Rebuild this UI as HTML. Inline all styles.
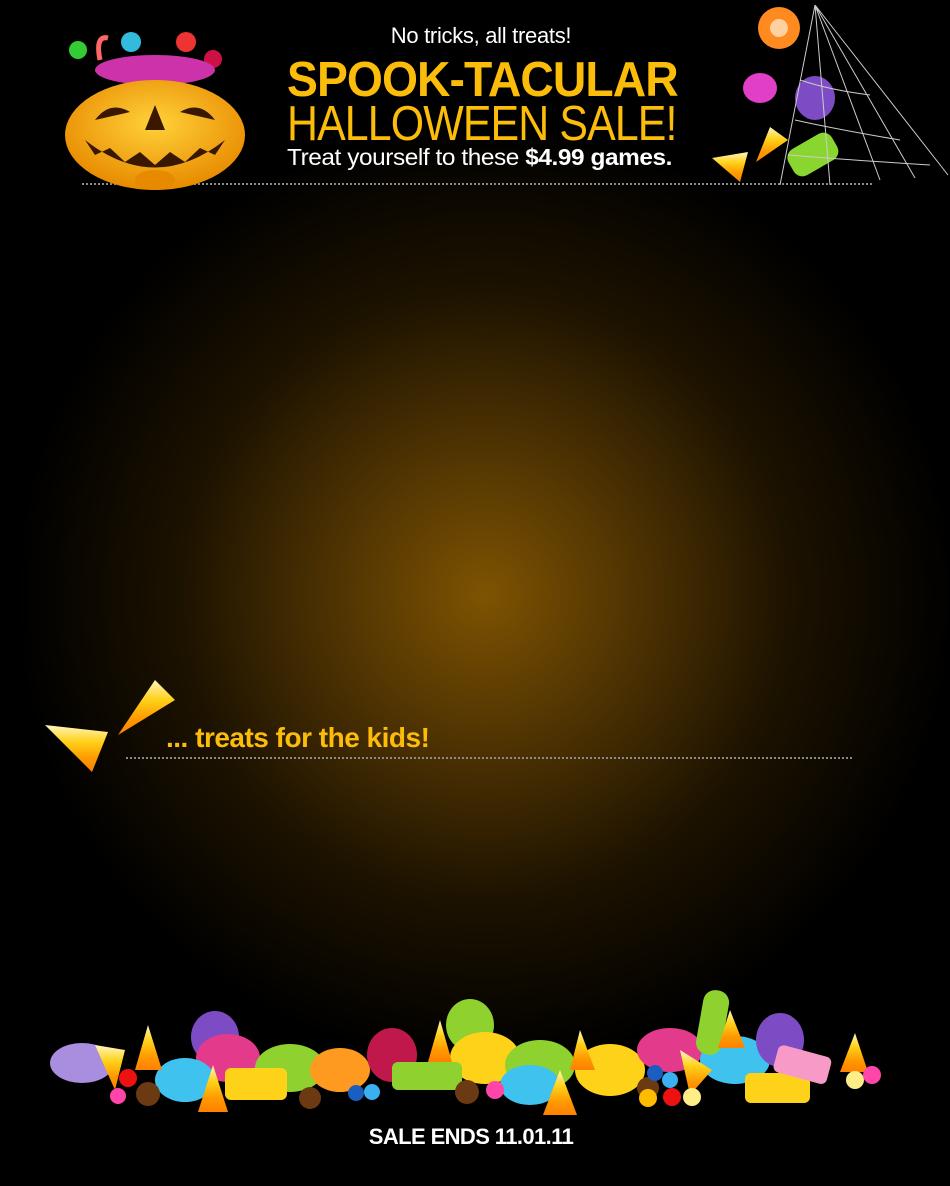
<!DOCTYPE html>
<html><head><meta charset="utf-8"><style>
html,body{margin:0;padding:0;background:#000;}
body{width:950px;height:1186px;position:relative;overflow:hidden;font-family:"Liberation Sans",sans-serif;
background:radial-gradient(ellipse 470px 470px at 485px 595px,#7e5302 0%,#4a3002 35%,#1c1200 65%,#000 100%);}
.a{position:absolute;white-space:nowrap;}
.dash{position:absolute;height:0;border-top:2px dotted #8a8a8a;}
</style></head><body>
<div class="a" style="left:0;width:962px;top:23px;text-align:center;color:#fff;font-size:22px;letter-spacing:-0.3px">No tricks, all treats!</div>
<div class="a" style="left:287px;top:52px;color:#fbbd0a;font-size:49px;font-weight:bold;letter-spacing:-1px;transform:scaleX(0.945);transform-origin:left">SPOOK-TACULAR</div>
<div class="a" style="left:287px;top:96px;color:#fbbd0a;font-size:49px;letter-spacing:-1px;transform:scaleX(0.875);transform-origin:left">HALLOWEEN SALE!</div>
<div class="a" style="left:287px;top:144px;color:#fff;font-size:23px;letter-spacing:-0.4px;transform:scaleX(1.06);transform-origin:left">Treat yourself to these <b>$4.99 games.</b></div>
<div class="dash" style="left:82px;width:790px;top:183px"></div>
<div class="a" style="left:166px;top:722px;color:#fbbd0a;font-size:28px;font-weight:bold;letter-spacing:-0.5px">... treats for the kids!</div>
<div class="dash" style="left:126px;width:726px;top:757px"></div>
<div class="a" style="left:0;width:942px;top:1124px;text-align:center;color:#fff;font-size:22px;font-weight:bold;letter-spacing:-0.6px">SALE ENDS 11.01.11</div>

<svg class="a" style="left:0;top:0" width="950" height="1186">
<defs>
<radialGradient id="pk" cx="50%" cy="40%" r="60%"><stop offset="0" stop-color="#ffd23a"/><stop offset="1" stop-color="#e88a00"/></radialGradient>
<linearGradient id="cc" x1="0" y1="0" x2="0" y2="1"><stop offset="0" stop-color="#fff6c0"/><stop offset=".35" stop-color="#ffd21a"/><stop offset=".7" stop-color="#ff9a00"/><stop offset="1" stop-color="#ff8000"/></linearGradient>
</defs>
<g>
<circle cx="78" cy="50" r="9" fill="#3c3"/><circle cx="131" cy="42" r="10" fill="#3bd"/><circle cx="186" cy="42" r="10" fill="#e33"/><circle cx="213" cy="59" r="9" fill="#c14"/>
<path d="M100 60 Q95 35 108 38" stroke="#f66" stroke-width="5" fill="none"/>
<ellipse cx="155" cy="70" rx="60" ry="15" fill="#c3a"/>
<ellipse cx="155" cy="135" rx="90" ry="55" fill="url(#pk)"/>
<ellipse cx="155" cy="180" rx="20" ry="10" fill="#e88a00"/>
<path d="M95 120 Q110 100 130 112 Z M180 112 Q200 100 215 120 Z" fill="#3a1800"/>
<path d="M145 130 L155 105 L165 130 Z" fill="#3a1800"/>
<path d="M85 140 Q155 195 225 140 L215 155 L200 148 L185 162 L170 152 L155 165 L140 152 L125 162 L110 148 L95 155 Z" fill="#3a1800"/>
</g>
<circle cx="779" cy="28" r="21" fill="#ff8a20"/><circle cx="779" cy="28" r="9" fill="#ffd0a0"/>
<ellipse cx="760" cy="88" rx="17" ry="15" fill="#e23fc8"/>
<ellipse cx="815" cy="98" rx="20" ry="22" fill="#7d4cc4"/>
<polygon points="712,158 748,152 740,182" fill="url(#cc)"/>
<polygon points="770,127 788,140 756,162" fill="url(#cc)"/>
<rect x="788" y="140" width="50" height="30" rx="10" transform="rotate(-30 812 155)" fill="#8ad630"/>
<g stroke="#ccc" stroke-width="1" fill="none">
<path d="M815 5 L780 185 M815 5 L948 175 M815 5 L830 185 M815 5 L880 180 M815 5 L915 178"/>
<path d="M800 80 Q830 90 870 95 M795 120 Q840 130 900 140 M788 155 Q850 160 930 165"/>
</g>
<polygon points="45,725 108,732 92,772" fill="url(#cc)"/>
<polygon points="175,700 155,680 118,735" fill="url(#cc)"/>
<g>
<ellipse cx="82" cy="1063" rx="32" ry="20" fill="#a98ee0"/>
<ellipse cx="215" cy="1037" rx="24" ry="26" fill="#7d4cc4"/>
<ellipse cx="228" cy="1058" rx="32" ry="24" fill="#e33a8c"/>
<ellipse cx="185" cy="1080" rx="30" ry="22" fill="#3fc3ee"/>
<ellipse cx="290" cy="1068" rx="35" ry="24" fill="#8fd12f"/>
<ellipse cx="340" cy="1070" rx="30" ry="22" fill="#ff9a20"/>
<ellipse cx="392" cy="1055" rx="25" ry="27" fill="#c0184a"/>
<ellipse cx="470" cy="1025" rx="24" ry="26" fill="#8fd12f"/>
<ellipse cx="485" cy="1058" rx="35" ry="26" fill="#ffd21a"/>
<ellipse cx="540" cy="1065" rx="35" ry="25" fill="#8fd12f"/>
<ellipse cx="530" cy="1085" rx="30" ry="20" fill="#3fc3ee"/>
<ellipse cx="610" cy="1070" rx="35" ry="26" fill="#ffd21a"/>
<ellipse cx="670" cy="1050" rx="33" ry="22" fill="#e33a8c"/>
<ellipse cx="735" cy="1060" rx="35" ry="24" fill="#3fc3ee"/>
<ellipse cx="780" cy="1040" rx="24" ry="27" fill="#7d4cc4"/>
<rect x="700" y="990" width="26" height="65" rx="12" fill="#8fd12f" transform="rotate(10 713 1020)"/>
<rect x="225" y="1068" width="62" height="32" rx="6" fill="#ffd21a"/>
<rect x="392" y="1062" width="70" height="28" rx="6" fill="#8fd12f"/>
<rect x="745" y="1073" width="65" height="30" rx="6" fill="#ffd21a"/>
<rect x="775" y="1050" width="55" height="28" rx="6" fill="#f79ac8" transform="rotate(15 800 1064)"/>
<polygon points="148,1025 135,1070 162,1070" fill="url(#cc)"/>
<polygon points="213,1065 198,1112 228,1112" fill="url(#cc)"/>
<polygon points="440,1020 428,1062 452,1062" fill="url(#cc)"/>
<polygon points="560,1070 543,1115 577,1115" fill="url(#cc)"/>
<polygon points="580,1030 570,1070 595,1070" fill="url(#cc)"/>
<polygon points="855,1033 840,1072 868,1072" fill="url(#cc)"/>
<polygon points="730,1010 718,1048 745,1048" fill="url(#cc)"/>
<polygon points="95,1045 125,1050 115,1090" fill="url(#cc)"/>
<polygon points="680,1050 712,1070 690,1095" fill="url(#cc)"/>
<circle cx="128" cy="1078" r="9" fill="#e11"/><circle cx="118" cy="1096" r="8" fill="#f4a"/>
<circle cx="148" cy="1094" r="12" fill="#6b3a12"/><circle cx="310" cy="1098" r="11" fill="#6b3a12"/>
<circle cx="356" cy="1093" r="8" fill="#1a5fc0"/><circle cx="372" cy="1092" r="8" fill="#3ab0f0"/>
<circle cx="467" cy="1092" r="12" fill="#6b3a12"/><circle cx="495" cy="1090" r="9" fill="#f4a"/>
<circle cx="648" cy="1088" r="11" fill="#6b3a12"/><circle cx="648" cy="1098" r="9" fill="#fb0"/>
<circle cx="672" cy="1097" r="9" fill="#e11"/><circle cx="692" cy="1097" r="9" fill="#fe8"/>
<circle cx="655" cy="1073" r="8" fill="#1a5fc0"/><circle cx="670" cy="1080" r="8" fill="#3ab0f0"/>
<circle cx="855" cy="1080" r="9" fill="#fe8"/><circle cx="872" cy="1075" r="9" fill="#f4a"/>
</g>
</svg>
</body></html>
